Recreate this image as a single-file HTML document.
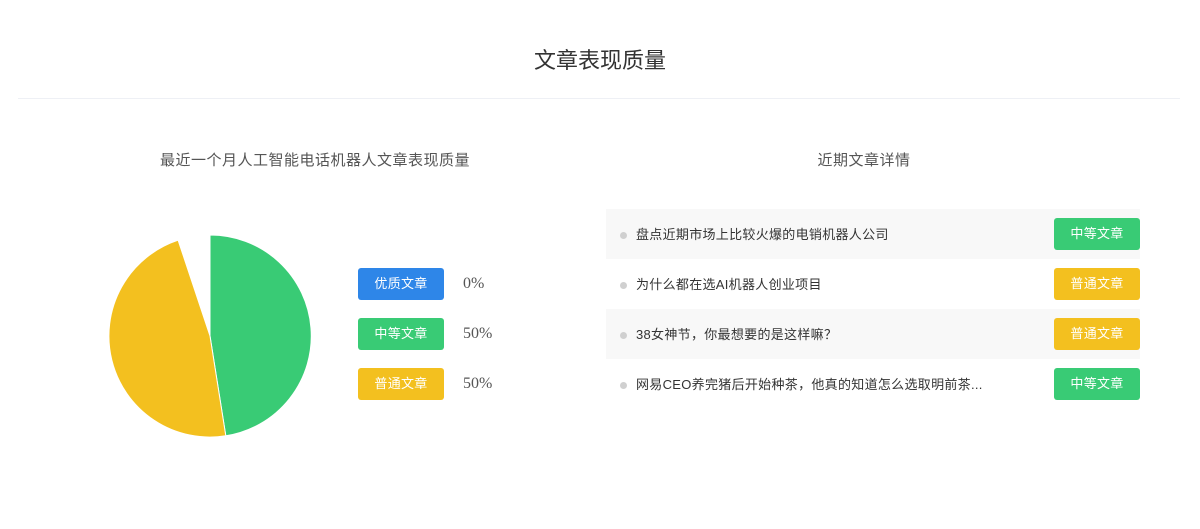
<!DOCTYPE html>
<html><head><meta charset="utf-8"><style>
body{margin:0;width:1200px;height:529px;background:#fff;font-family:"Liberation Sans","Noto Sans CJK SC",sans-serif;position:relative;overflow:hidden}
.a{position:absolute;white-space:nowrap}
.title{left:0;width:1200px;top:46px;text-align:center;font-size:22px;color:#333;line-height:30px}
.line{left:18px;width:1162px;top:98px;height:1px;background:#eef0f5}
.sub{top:151px;font-size:15px;color:#555;line-height:20px;text-align:center;letter-spacing:0.5px}
.tag{width:86px;height:32px;border-radius:3px;color:#fff;font-size:13px;line-height:32px;text-align:center;letter-spacing:0.3px}
.b{background:#2e86e8}.g{background:#39cb75}.y{background:#f3c01f}
.pct{font-family:"Liberation Serif",serif;font-size:16px;color:#555;line-height:32px;left:463px}
.row{left:606px;width:534px;height:50px}
.row.s{background:#f8f8f8}
.dot{left:620px;width:7px;height:7px;border-radius:50%;background:#d0d0d0}
.txt{left:636px;font-size:13px;color:#333;line-height:20px;letter-spacing:0.3px}
</style></head><body>
<div class="a title">文章表现质量</div>
<div class="a line"></div>
<div class="a sub" style="left:115px;width:400px">最近一个月人工智能电话机器人文章表现质量</div>
<div class="a sub" style="left:764px;width:200px">近期文章详情</div>
<svg class="a" style="left:0;top:0" width="600" height="529">
<path d="M210,336 L210,235 A101,101 0 0 1 225.8,435.8 Z" fill="#39cb75" stroke="#fff" stroke-width="1"/>
<path d="M210,336 L225.8,435.8 A101,101 0 0 1 178.1,240.2 Z" fill="#f3c01f" stroke="#fff" stroke-width="1"/>
</svg>
<div class="a tag b" style="left:358px;top:268px">优质文章</div><div class="a pct" style="top:268px">0%</div>
<div class="a tag g" style="left:358px;top:318px">中等文章</div><div class="a pct" style="top:318px">50%</div>
<div class="a tag y" style="left:358px;top:368px">普通文章</div><div class="a pct" style="top:368px">50%</div>
<div class="a row s" style="top:209px"></div>
<div class="a row" style="top:259px"></div>
<div class="a row s" style="top:309px"></div>
<div class="a row" style="top:359px"></div>
<div class="a dot" style="top:232px"></div><div class="a txt" style="top:225px">盘点近期市场上比较火爆的电销机器人公司</div>
<div class="a dot" style="top:282px"></div><div class="a txt" style="top:275px">为什么都在选AI机器人创业项目</div>
<div class="a dot" style="top:332px"></div><div class="a txt" style="top:325px">38女神节，你最想要的是这样嘛？</div>
<div class="a dot" style="top:382px"></div><div class="a txt" style="top:375px">网易CEO养完猪后开始种茶，他真的知道怎么选取明前茶...</div>
<div class="a tag g" style="left:1054px;top:218px">中等文章</div>
<div class="a tag y" style="left:1054px;top:268px">普通文章</div>
<div class="a tag y" style="left:1054px;top:318px">普通文章</div>
<div class="a tag g" style="left:1054px;top:368px">中等文章</div>
</body></html>
